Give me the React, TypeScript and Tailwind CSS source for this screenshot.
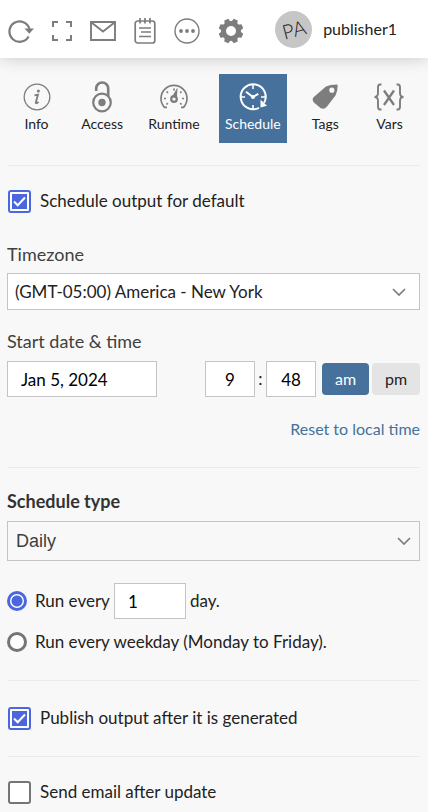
import { useState } from "react";
import type { ReactNode } from "react";

function RefreshIcon() {
  return (
    <svg width="26" height="24" viewBox="0 0 26 24" fill="none">
      <path d="M20.600 17.500a10.200 10.200 0 1 1 .9-7.500" stroke="#7d7d7d" strokeWidth="2.200" />
      <path d="M16.500 9.500h9.500l-4.700 5.200z" fill="#7d7d7d" />
    </svg>
  );
}

function ExpandIcon() {
  return (
    <svg width="20" height="20" viewBox="0 0 20 20" fill="none" stroke="#7d7d7d" strokeWidth="2">
      <path d="M1 6V1h5M14 1h5v5M19 14v5h-5M6 19H1v-5" />
    </svg>
  );
}

function MailIcon() {
  return (
    <svg width="26" height="20" viewBox="0 0 26 20" fill="none" stroke="#7d7d7d" strokeWidth="1.900">
      <path d="M1 1h24v18H1zM1.500 1.500 13 10.500l11.500-9" />
    </svg>
  );
}

function NotesIcon() {
  return (
    <svg width="22" height="26" viewBox="0 0 22 26" fill="none" stroke="#7d7d7d" strokeWidth="1.700">
      <rect x="1.200" y="3" width="19.600" height="22" rx="2.500" />
      <path d="M6 0v5.500M11 0v5.500M16 0v5.500" />
      <path d="M5 10h12M7 14h10M5 18.500h12" />
    </svg>
  );
}

function MoreIcon() {
  return (
    <svg width="26" height="26" viewBox="0 0 26 26" fill="none">
      <circle cx="13" cy="13" r="12" stroke="#7d7d7d" strokeWidth="1.400" />
      <g fill="#7d7d7d">
        <circle cx="7" cy="13" r="1.900" />
        <circle cx="13" cy="13" r="1.900" />
        <circle cx="19" cy="13" r="1.900" />
      </g>
    </svg>
  );
}

function GearIcon() {
  const teeth = [22.5, 67.5, 112.5, 157.5, 202.5, 247.5, 292.5, 337.5];
  return (
    <svg width="26" height="26" viewBox="0 0 26 26" fill="#7d7d7d">
      <circle cx="13" cy="13" r="7.500" fill="none" stroke="#7d7d7d" strokeWidth="5" />
      {teeth.map((a) => (
        <path key={a} d="M9.800 4.500 10.800.7h4.400l1 3.800z" transform={`rotate(${a} 13 13)`} />
      ))}
    </svg>
  );
}

function InfoIcon() {
  return (
    <svg width="28" height="28" viewBox="0 0 28 28" fill="none">
      <circle cx="14" cy="14" r="12.800" stroke="#7d7d7d" strokeWidth="1.300" />
      <circle cx="15.400" cy="8" r="1.500" fill="#7d7d7d" />
      <path d="M11.500 12.300l3.500-.7-2.200 7.900q-.4 1.700 2.800-.6" stroke="#7d7d7d" strokeWidth="1.800" />
    </svg>
  );
}

function LockIcon() {
  return (
    <svg width="22" height="32" viewBox="0 0 22 32" fill="none" stroke="#7d7d7d">
      <path d="M5.200 10V7.500a6 6 0 0 1 12 0V15" strokeWidth="2.600" />
      <circle cx="11" cy="21.500" r="8.800" strokeWidth="2.200" />
      <circle cx="11" cy="21.500" r="3.700" fill="#7d7d7d" stroke="none" />
    </svg>
  );
}

function GaugeIcon() {
  return (
    <svg width="30" height="28" viewBox="0 0 30 28" fill="none" stroke="#7d7d7d">
      <path d="M8 24.300H5.500A13 13 0 1 1 24.500 24.300H22" strokeWidth="1.700" />
      <path d="M5 15.500h2M23 15.500h2M7.700 8.500l1.300 1.300M22.500 8.500l-1.300 1.300M15 5.500v2M7.500 21.500l1.300-1.300M22.500 21.500l-1.300-1.300" strokeWidth="1.700" />
      <circle cx="15" cy="16" r="2.800" strokeWidth="2.200" />
      <path d="M12.800 14 18.500 4.500l-.6 11z" fill="#7d7d7d" stroke="none" />
    </svg>
  );
}

function ClockIcon() {
  return (
    <svg width="28" height="28" viewBox="0 0 28 28" fill="none" stroke="#fff">
      <path d="M20 24.800A12.500 12.500 0 1 1 25 20" strokeWidth="2" />
      <path d="M14 2v4M14 22v4M2 14h4M22 14h4" strokeWidth="1.600" />
      <path d="M7 8.700 14 14l5.300-3.200" strokeWidth="2" />
      <circle cx="14" cy="14" r="2" fill="#fff" stroke="none" />
      <path d="M21.500 16.800v7.700l6.500-1.800z" fill="#fff" stroke="none" />
    </svg>
  );
}

function TagIcon() {
  return (
    <svg width="26" height="26" viewBox="0 0 26 26">
      <path
        fill="#7d7d7d"
        fillRule="evenodd"
        d="M14 2.500Q18 .5 25.500.5 26 6.500 23.500 11.500L15 22.500q-3 3.500-6.500 1.500l-6-5Q-.8 16 1.800 13zM19.800 3.500a2.600 2.600 0 1 0 .1 5.200 2.600 2.600 0 0 0-.1-5.200z"
      />
    </svg>
  );
}

function VarsIcon() {
  return (
    <svg width="32" height="28" viewBox="0 0 32 28" fill="none" stroke="#7d7d7d">
      <path d="M8.500 1.500H7Q5 1.500 5 4.500V10q0 4-3.500 4Q5 14 5 18v5.500q0 3 2 3h1.500" strokeWidth="1.900" />
      <path d="M23.500 1.500H25q2 0 2 3V10q0 4 3.500 4-3.500 0-3.500 4v5.500q0 3-2 3h-1.500" strokeWidth="1.900" />
      <path d="m11 7.500 10 14.500M21 7.500 11 22" strokeWidth="2.300" />
    </svg>
  );
}

function Chevron() {
  return (
    <svg className="pointer-events-none col-start-1 row-start-1 self-center justify-self-end" width="14" height="8" viewBox="0 0 14 8" fill="none">
      <path d="m1 1 6 6 6-6" stroke="#7d7d7d" strokeWidth="1.700" />
    </svg>
  );
}

const tabs: { name: string; icon: ReactNode }[] = [
  { name: "Info", icon: <InfoIcon /> },
  { name: "Access", icon: <LockIcon /> },
  { name: "Runtime", icon: <GaugeIcon /> },
  { name: "Schedule", icon: <ClockIcon /> },
  { name: "Tags", icon: <TagIcon /> },
  { name: "Vars", icon: <VarsIcon /> },
];

function CheckRow({ label, initial }: { label: string; initial: boolean }) {
  const [on, setOn] = useState(initial);
  return (
    <label className="flex h-6 items-center gap-[9px] pl-px">
      <span className="grid size-[23px] shrink-0">
        <input
          type="checkbox"
          checked={on}
          onChange={() => setOn(!on)}
          className="col-start-1 row-start-1 size-[23px] appearance-none rounded-[3px] border-2 border-[#757575] bg-white checked:border-[#4a67dd]"
        />
        {on && (
          <svg className="pointer-events-none col-start-1 row-start-1" width="23" height="23" viewBox="0 0 23 23" fill="none">
            <rect x="4" y="4" width="15" height="15" fill="#4a67dd" />
            <path d="m6 11.500 3.700 3.700L17 7.500" stroke="#fff" strokeWidth="2" />
          </svg>
        )}
      </span>
      {label}
    </label>
  );
}

const box = "border border-[#c4c4c4] bg-white text-black";
const radio =
  "size-5 shrink-0 appearance-none rounded-full border-3 border-[#757575] bg-white checked:border-[#4a67dd] checked:bg-[radial-gradient(circle,#4a67dd_5px,#fff_6px)]";

export default function App() {
  const [tab, setTab] = useState("Schedule");
  const [half, setHalf] = useState("am");
  const [mode, setMode] = useState("daily");
  return (
    <div className="min-h-screen bg-[#f8f8f8] font-['Lato',sans-serif] text-[17px] leading-6 text-[#222]">
      <header className="flex h-[58px] items-center bg-white pr-[31px] pl-2 shadow-[0_0_16px_rgba(0,0,0,0.2)]">
        <nav aria-label="Tools" className="flex flex-1 items-center gap-[18px] pt-[3px]">
          <button aria-label="Refresh"><RefreshIcon /></button>
          <button aria-label="Full screen"><ExpandIcon /></button>
          <button aria-label="Email"><MailIcon /></button>
          <button aria-label="Notes"><NotesIcon /></button>
          <button aria-label="More"><MoreIcon /></button>
          <button aria-label="Settings"><GearIcon /></button>
        </nav>
        <button className="flex items-center gap-[11px]">
          <span className="grid size-[37px] place-items-center rounded-full bg-[#c6c6c6] text-xl font-light">
            <span className="-rotate-15">PA</span>
          </span>
          <span className="text-base">publisher1</span>
        </button>
      </header>

      <nav aria-label="Sections" className="flex justify-between pt-4 pr-[13px] pl-[11px]">
        {tabs.map((t) => (
          <button
            key={t.name}
            onClick={() => setTab(t.name)}
            className={`flex h-[69px] min-w-[51px] flex-col items-center px-[6px] text-sm leading-5 ${
              t.name === tab ? "bg-[#45719c] text-white" : ""
            }`}
          >
            <span className="grid h-10 place-items-center pt-[5px]">{t.icon}</span>
            {t.name}
          </button>
        ))}
      </nav>

      <main className="flex flex-col px-2 pl-[7px]">
        <section className="mt-[22px] border-t border-[#ececec] pt-[23px] pb-[37px]">
          <CheckRow label="Schedule output for default" initial={true} />
          <label htmlFor="timezone" className="mt-[29px] block text-lg leading-6 text-[#404040]">Timezone</label>
          <div className={`mt-[7px] grid h-[37px] pr-[13px] ${box}`}>
            <select id="timezone" className="col-start-1 row-start-1 appearance-none pl-[7px] text-[#222]">
              <option>(GMT-05:00) America - New York</option>
            </select>
            <Chevron />
          </div>

          <label htmlFor="date" className="mt-[19px] block text-lg leading-6 text-[#404040]">Start date &amp; time</label>
          <div className="mt-2 flex items-center">
            <input id="date" defaultValue="Jan 5, 2024" className={`h-9 w-[150px] px-[13px] ${box}`} />
            <div className="ml-auto flex items-center">
              <input aria-label="Hour" defaultValue="9" className={`h-9 w-[50px] text-center ${box}`} />
              <span className="w-[11px] text-center">:</span>
              <input aria-label="Minute" defaultValue="48" className={`h-9 w-[50px] text-center ${box}`} />
              <div className="ml-[6px] flex gap-[3px] text-base">
                {["am", "pm"].map((h) => (
                  <button
                    key={h}
                    onClick={() => setHalf(h)}
                    className={`h-8 rounded-sm ${h === "am" ? "w-[47px]" : "w-12"} ${
                      half === h ? "bg-[#45719c] text-white" : "bg-[#e4e4e4]"
                    }`}
                  >
                    {h}
                  </button>
                ))}
              </div>
            </div>
          </div>
          <div className="mt-5 h-[13px] text-right text-base leading-6 text-[#45719c]">
            <a href="#reset">Reset to local time</a>
          </div>
        </section>

        <section className="border-t border-[#ececec] pt-[21px] pb-[26px]">
          <label htmlFor="type" className="block text-lg leading-6 font-bold text-[#333]">Schedule type</label>
          <div className="mt-2 grid h-10 border border-[#c4c4c4] pr-2">
            <select id="type" className="col-start-1 row-start-1 appearance-none pl-2 font-['Liberation_Sans',Arial,sans-serif] text-lg text-[#404040]">
              <option>Daily</option>
              <option>Weekly</option>
              <option>Monthly</option>
            </select>
            <Chevron />
          </div>
          <div className="mt-[22px] flex h-9 items-center">
            <input id="every" type="radio" name="mode" checked={mode === "daily"} onChange={() => setMode("daily")} className={radio} />
            <label htmlFor="every" className="pl-2">Run every</label>
            <input aria-label="Days" defaultValue="1" className={`mx-1 h-9 w-[72px] px-[13px] ${box}`} />
            <span>day.</span>
          </div>
          <label className="mt-[11px] flex items-center gap-2">
            <input type="radio" name="mode" checked={mode === "weekday"} onChange={() => setMode("weekday")} className={radio} />
            Run every weekday (Monday to Friday).
          </label>
        </section>

        <section className="border-t border-[#ececec] pt-[25px] pb-[26px]">
          <CheckRow label="Publish output after it is generated" initial={true} />
        </section>
        <section className="border-t border-[#ececec] pt-[23px]">
          <CheckRow label="Send email after update" initial={false} />
        </section>
      </main>
    </div>
  );
}
